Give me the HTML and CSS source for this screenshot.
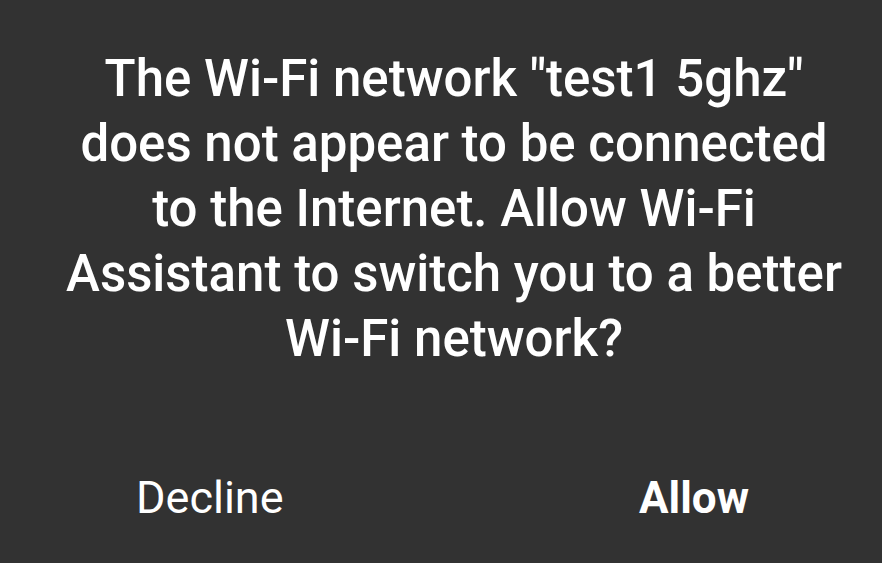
FILE: index.html
```html
<!DOCTYPE html>
<html>
<head>
<meta charset="utf-8">
<link rel="stylesheet" href="styles.css">
</head>
<body>
<div class="dialog">
  <p class="message">The Wi-Fi network "test1 5ghz" does not appear to be connected to the Internet. Allow Wi-Fi Assistant to switch you to a better Wi-Fi network?</p>
  <div class="actions">
    <span class="btn decline">Decline</span>
    <span class="btn allow">Allow</span>
  </div>
</div>
</body>
</html>
```
FILE: styles.css
```css
html, body {
  margin: 0;
  padding: 0;
  background: #323232;
}
.dialog {
  width: 882px;
  height: 563px;
  box-sizing: border-box;
  padding-top: 46px;
  display: flex;
  flex-direction: column;
  color: #ffffff;
  font-family: Roboto, "Liberation Sans", sans-serif;
}
.message {
  margin: 0 0 0 54px;
  width: 800px;
  text-align: center;
  font-size: 51px;
  font-weight: 500;
  line-height: 65px;
}
.actions {
  display: flex;
  align-items: baseline;
  justify-content: space-between;
  padding: 0 133px 0 136px;
  margin-top: 102px;
}
.btn {
  line-height: 50px;
}
.decline {
  font-size: 45px;
  font-weight: 400;
}
.allow {
  font-size: 44px;
  font-weight: 700;
}
```
